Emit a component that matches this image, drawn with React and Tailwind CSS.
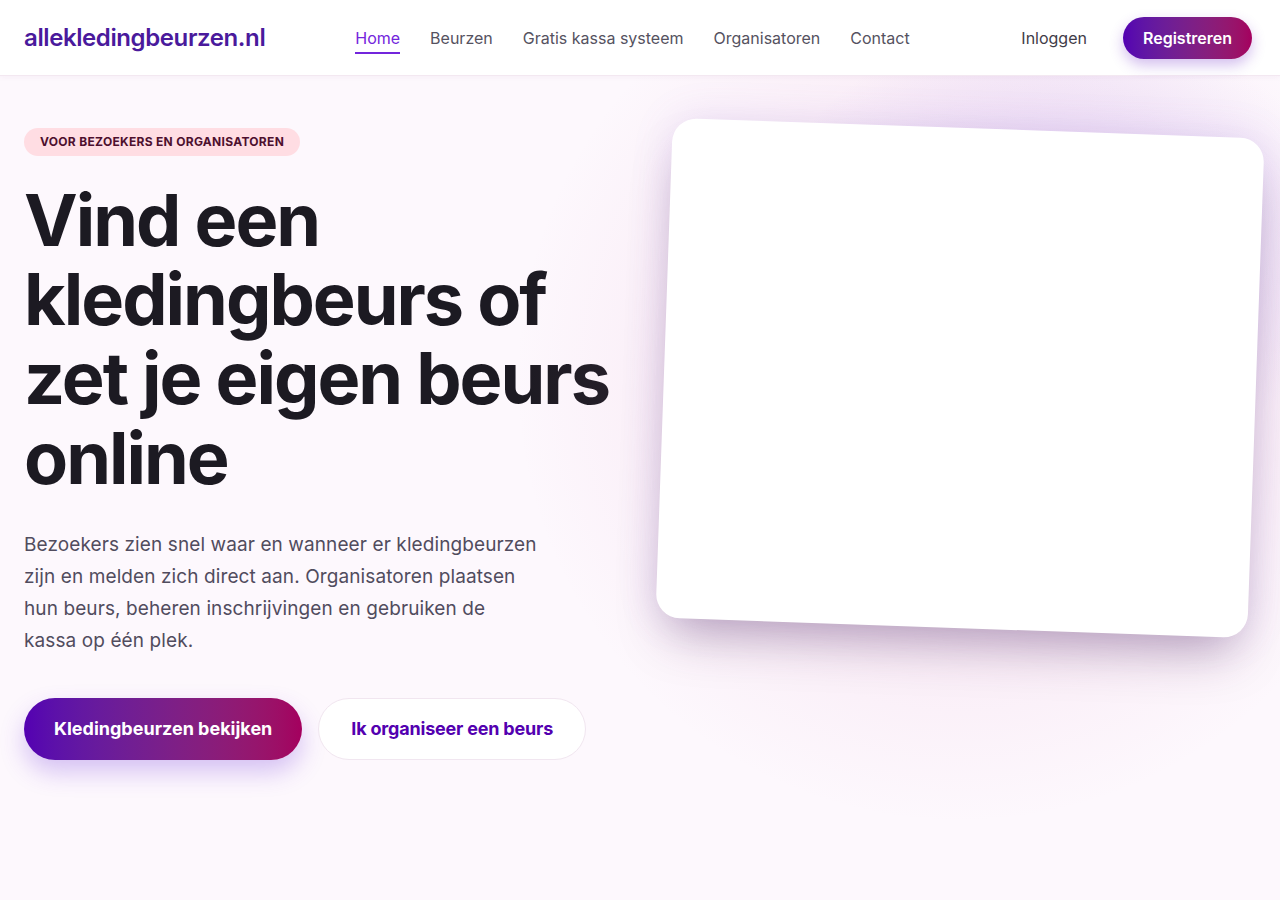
import { useState } from 'react';

const navLinks = ['Home', 'Beurzen', 'Gratis kassa systeem', 'Organisatoren', 'Contact'];

function Header() {
  const [active] = useState('Home');

  return (
    <header className="relative z-20 h-[76px] bg-white border-b border-[#f3e8f1] shadow-[0_1px_6px_rgba(120,40,120,0.05)]">
      <div className="h-full pl-6 pr-7 flex items-center">
        <a href="#" className="text-[24px] font-semibold tracking-[-0.4px] text-[#4a1a9c]">
          allekledingbeurzen.nl
        </a>

        <nav className="flex items-center gap-[30px] ml-[90px] pt-[4px]">
          {navLinks.map(link => (
            <a
              key={link}
              href="#"
              className={`text-[16px] leading-6 pb-[2px] border-b-2 ${link === active
                ? 'text-[#7325dc] border-[#7325dc]'
                : 'text-[#55525f] border-transparent'
                }`}
            >
              {link}
            </a>
          ))}
        </nav>

        <div className="ml-auto flex items-center gap-9">
          <a href="#" className="text-[16px] text-[#3f3c48]">Inloggen</a>
          <button className="h-[42px] px-[20px] rounded-full text-white text-[16px] font-semibold bg-gradient-to-r from-[#5400b2] to-[#a4005e] shadow-[0_6px_14px_rgba(110,40,200,0.3)]">
            Registreren
          </button>
        </div>
      </div>
    </header>
  );
}

function Hero() {
  return (
    <section className="relative px-6 pt-[52px] pb-24">
      <div className="grid grid-cols-2 gap-12 items-start">
        <div>
          <span className="inline-block h-7 leading-7 px-4 rounded-full bg-[#ffdde3] text-[12px] font-bold tracking-[0.3px] text-[#4d0f2e] uppercase">
            Voor bezoekers en organisatoren
          </span>

          <h1 className="mt-6 text-[72px] leading-[1.1] font-bold tracking-[-2px] text-[#1c1a22]">
            Vind een kledingbeurs of zet je eigen beurs online
          </h1>

          <p className="mt-8 text-[19px] leading-8 tracking-[0.1px] text-[#514c5e]">
            Bezoekers zien snel waar en wanneer er kledingbeurzen<br />
            zijn en melden zich direct aan. Organisatoren plaatsen<br />
            hun beurs, beheren inschrijvingen en gebruiken de<br />
            kassa op één plek.
          </p>

          <div className="mt-[41px] flex items-center gap-4">
            <button className="h-[62px] px-[30px] rounded-full text-white text-[18px] font-bold bg-gradient-to-r from-[#5400b2] to-[#a4005e] shadow-[0_12px_24px_rgba(110,50,220,0.28)]">
              Kledingbeurzen bekijken
            </button>
            <button className="h-[62px] px-8 rounded-full bg-white border border-[#f1e6f0] text-[18px] font-bold tracking-[-0.2px] text-[#5300b0]">
              Ik organiseer een beurs
            </button>
          </div>
        </div>

        <div className="relative h-[500px]">
          {/* soft glows behind the card */}
          <div className="absolute left-1/2 top-1/2 -translate-x-1/2 -translate-y-1/2 w-[900px] h-[900px] rounded-full bg-[radial-gradient(circle,rgba(214,120,180,0.16)_0%,rgba(214,120,180,0.08)_45%,rgba(214,120,180,0)_70%)]" />
          <div className="absolute -right-[100px] -top-[110px] w-[600px] h-[460px] rounded-full bg-[radial-gradient(ellipse,rgba(150,110,230,0.26)_0%,rgba(150,110,230,0)_70%)]" />
          <div className="relative h-full rounded-[24px] bg-white rotate-2 shadow-[0_28px_50px_-14px_rgba(70,30,80,0.35),0_0_40px_rgba(140,100,220,0.15)]" />
        </div>
      </div>
    </section>
  );
}

export default function App() {
  return (
    <div className="min-h-[900px] overflow-hidden bg-[#fdf8fd] font-['Inter','Noto_Sans',sans-serif]">
      <Header />
      <Hero />
    </div>
  );
}
